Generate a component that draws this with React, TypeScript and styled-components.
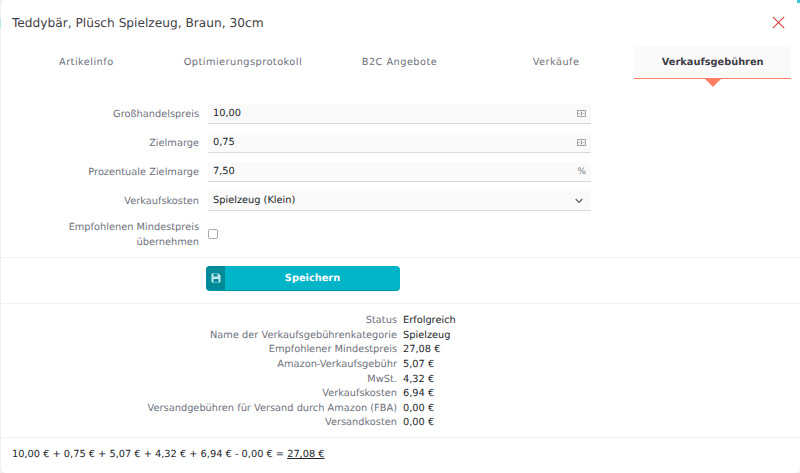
import React from "react";
import styled, { createGlobalStyle } from "styled-components";

const Global = createGlobalStyle`
  html, body { margin: 0; padding: 0; background: #eef0f1; }
  * { box-sizing: border-box; }
  #root { width: 800px; height: 473px; overflow: hidden; position: relative; }
`;

const Backdrop = styled.span<{ $side: "left" | "right" }>`
  position: absolute;
  background: #b9e6ea;
  ${(p) =>
    p.$side === "left"
      ? "left: 0; top: 18px; width: 1px; height: 10px;"
      : "right: 0; top: 0; width: 3px; height: 3px; background: #3fc4d2;"}
`;

const Modal = styled.div`
  width: 799px;
  height: 473px;
  margin-left: 1px;
  background: #fff;
  border-radius: 5px;
  font-family: "DejaVu Sans", sans-serif;
  font-size: 9.8px;
  text-rendering: geometricPrecision;
  color: #212529;
  display: flex;
  flex-direction: column;
`;

const Header = styled.div`
  height: 46px;
  padding: 0 15px 1px 11px;
  display: flex;
  align-items: center;
  justify-content: space-between;
`;

const Title = styled.h1`
  margin: 0;
  font-size: 12.2px;
  font-weight: 400;
  color: #3f4047;
`;

const Close = styled.svg`
  width: 13px;
  height: 13px;
  stroke: #d2413f;
  stroke-width: 1.1;
  fill: none;
`;

const Tabs = styled.div`
  display: flex;
  height: 33px;
  padding: 0 9px 0 7px;
`;

const Tab = styled.div<{ $active?: boolean }>`
  flex: 1;
  position: relative;
  display: flex;
  align-items: center;
  justify-content: center;
  letter-spacing: ${(p) => (p.$active ? "0" : "0.44px")};
  font-weight: ${(p) => (p.$active ? 700 : 400)};
  color: ${(p) => (p.$active ? "#3f4047" : "#6f727d")};
  background: ${(p) => (p.$active ? "#fafafa" : "transparent")};
  border-bottom: 1px solid ${(p) => (p.$active ? "#ff7f66" : "transparent")};
  border-radius: 4px 4px 0 0;
  ${(p) =>
    p.$active &&
    `&::after {
      content: "";
      position: absolute;
      left: 50%;
      bottom: -9px;
      margin-left: -8px;
      border-left: 8px solid transparent;
      border-right: 8px solid transparent;
      border-top: 8px solid #ff7f66;
    }`}
`;

const Form = styled.div`
  padding-top: 25px;
  display: flex;
  flex-direction: column;
  gap: 9px;
`;

const Row = styled.div`
  display: grid;
  grid-template-columns: 198px 383px;
  column-gap: 9px;
  align-items: center;
`;

const Label = styled.label`
  text-align: right;
  color: #6f727d;
  line-height: 15px;
`;

const Field = styled.div`
  height: 20px;
  background: #fafafa;
  border-bottom: 1px solid #d8d9de;
  padding: 0 5px;
  display: flex;
  align-items: center;
  justify-content: space-between;
  color: #212529;
`;

const Unit = styled.span`
  color: #7d7f88;
  font-size: 9px;
  display: flex;
  align-items: center;
`;

const Chevron = styled.svg`
  width: 8px;
  height: 6px;
  margin-right: 3px;
  fill: none;
  stroke: #55575f;
  stroke-width: 1.1;
`;

const Check = styled.span`
  display: block;
  width: 10px;
  height: 10px;
  margin-top: -2px;
  border: 1px solid #a9abb3;
  border-radius: 2px;
  background: #fff;
`;

const SaveBar = styled.div`
  margin-top: 7px;
  height: 47px;
  border-top: 1px solid #f0f0f2;
  border-bottom: 1px solid #f0f0f2;
  padding: 8px 0 0 205px;
  display: flex;
  align-items: flex-start;
`;

const SaveButton = styled.button`
  width: 194px;
  height: 25px;
  padding: 0;
  border: 0;
  border-bottom: 1px solid #0096a6;
  border-radius: 4px;
  background: #00b5c8;
  color: #fff;
  font: 700 9.8px "DejaVu Sans", sans-serif;
  text-rendering: geometricPrecision;
  display: flex;
  overflow: hidden;
`;

const SaveIcon = styled.span`
  width: 19px;
  height: 100%;
  background: #008a9a;
  display: flex;
  align-items: center;
  justify-content: center;
`;

const SaveText = styled.span`
  flex: 1;
  align-self: center;
  text-align: center;
`;

const Stats = styled.dl`
  margin: 0;
  padding-top: 10px;
  display: grid;
  grid-template-columns: 396px 1fr;
  grid-auto-rows: 14.65px;
  column-gap: 6px;
  line-height: 14.65px;
  height: 133px;
`;

const Term = styled.dt`
  text-align: right;
  color: #6f727d;
`;

const Value = styled.dd`
  margin: 0;
  color: #212529;
`;

const Footer = styled.div`
  border-top: 1px solid #f0f0f2;
  padding: 10px 11px 0;
  color: #212529;
  line-height: 14px;
`;

const Total = styled.span`
  text-decoration: underline;
`;

const stats: [string, string][] = [
  ["Status", "Erfolgreich"],
  ["Name der Verkaufsgebührenkategorie", "Spielzeug"],
  ["Empfohlener Mindestpreis", "27,08 €"],
  ["Amazon-Verkaufsgebühr", "5,07 €"],
  ["MwSt.", "4,32 €"],
  ["Verkaufskosten", "6,94 €"],
  ["Versandgebühren für Versand durch Amazon (FBA)", "0,00 €"],
  ["Versandkosten", "0,00 €"],
];

const Money = () => (
  <svg width="9" height="7" viewBox="0 0 9 7">
    <rect width="9" height="7" fill="#a4a6ae" />
    <rect x="1" y="1" width="7" height="5" fill="#f4f4f5" />
    <path d="M4.5 1.6v3.8M1.6 3.5h1M6.4 3.5h1" stroke="#8b8d96" strokeWidth="1" />
  </svg>
);

export default function App() {
  return (
    <>
      <Global />
      <Modal>
        <Header>
          <Title>Teddybär, Plüsch Spielzeug, Braun, 30cm</Title>
          <Close viewBox="0 0 13 13">
            <path d="M0.8 0.8l11.4 11.4M12.2 0.8L0.8 12.2" />
          </Close>
        </Header>
        <Tabs>
          <Tab>Artikelinfo</Tab>
          <Tab>Optimierungsprotokoll</Tab>
          <Tab>B2C Angebote</Tab>
          <Tab>Verkäufe</Tab>
          <Tab $active>Verkaufsgebühren</Tab>
        </Tabs>
        <Form>
          <Row>
            <Label>Großhandelspreis</Label>
            <Field>10,00<Unit><Money /></Unit></Field>
          </Row>
          <Row>
            <Label>Zielmarge</Label>
            <Field>0,75<Unit><Money /></Unit></Field>
          </Row>
          <Row>
            <Label>Prozentuale Zielmarge</Label>
            <Field>7,50<Unit>%</Unit></Field>
          </Row>
          <Row>
            <Label>Verkaufskosten</Label>
            <Field>
              Spielzeug (Klein)
              <Chevron viewBox="0 0 8 6">
                <path d="M0.7 1l3.3 3.4L7.3 1" />
              </Chevron>
            </Field>
          </Row>
          <Row>
            <Label>Empfohlenen Mindestpreis<br />übernehmen</Label>
            <Check />
          </Row>
        </Form>
        <SaveBar>
          <SaveButton>
            <SaveIcon>
              <svg width="10" height="10" viewBox="0 0 10 10">
                <path d="M0.5 0.5h7l2 2v7h-9z" fill="#bfe6eb" />
                <rect x="2.5" y="1" width="4" height="2.5" fill="#008a9a" />
                <rect x="2.5" y="6" width="5" height="3" fill="#008a9a" />
              </svg>
            </SaveIcon>
            <SaveText>Speichern</SaveText>
          </SaveButton>
        </SaveBar>
        <Stats>
          {stats.map(([k, v]) => (
            <React.Fragment key={k}>
              <Term>{k}</Term>
              <Value>{v}</Value>
            </React.Fragment>
          ))}
        </Stats>
        <Footer>
          10,00 € + 0,75 € + 5,07 € + 4,32 € + 6,94 € - 0,00 € = <Total>27,08 €</Total>
        </Footer>
      </Modal>
      <Backdrop $side="left" />
      <Backdrop $side="right" />
    </>
  );
}
